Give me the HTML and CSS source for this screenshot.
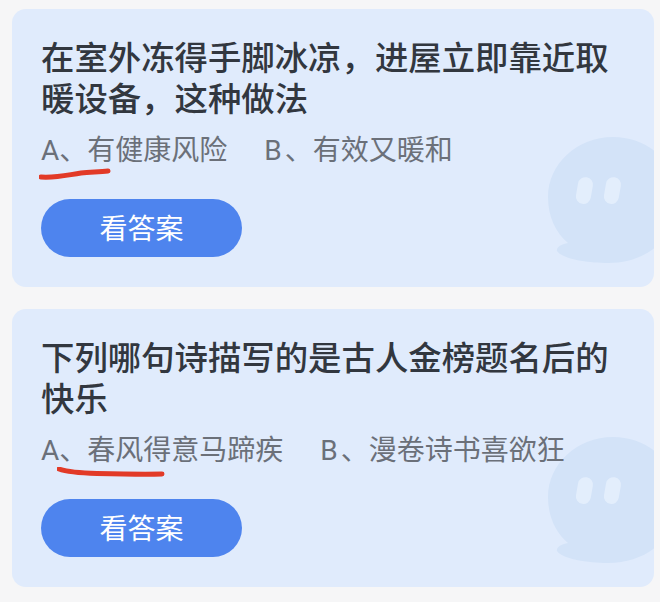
FILE: index.html
```html
<!DOCTYPE html>
<html lang="zh-CN">
<head>
  <meta charset="UTF-8">
  <meta name="viewport" content="width=device-width, initial-scale=1.0">
  <title>答题</title>
  <link rel="stylesheet" href="styles.css">
</head>
<body>
  <!-- Question 1 -->
  <section class="card">
    <svg class="bubble" width="130" height="126" viewBox="0 0 130 126">
      <path d="M65 0C101 0 130 27 130 62C130 100 100 126 60 126C40 126 14 122 9 114C8 110 14 107 20 106C8 96 0 80 0 60C0 27 29 0 65 0Z"/>
      <rect class="eye" x="29" y="40" width="15" height="27" rx="7.500" transform="rotate(10 36 53)"/>
      <rect class="eye" x="57" y="40" width="15" height="27" rx="7.500" transform="rotate(10 64 53)"/>
    </svg>
    <h2 class="question">在室外冻得手脚冰凉，进屋立即靠近取暖设备，这种做法</h2>
    <div class="options">
      <span class="option">A、有健康风险
        <svg class="mark mark-first" width="72" height="12" viewBox="0 0 72 12"><path d="M2 9C18 10 28 7 42 5C52 4 60 4 69 3"/></svg>
      </span>
      <span class="option"><span class="option-key">B</span>、有效又暖和</span>
    </div>
    <button class="answer-btn" type="button">看答案</button>
  </section>

  <!-- Question 2 -->
  <section class="card">
    <svg class="bubble" width="130" height="126" viewBox="0 0 130 126">
      <path d="M65 0C101 0 130 27 130 62C130 100 100 126 60 126C40 126 14 122 9 114C8 110 14 107 20 106C8 96 0 80 0 60C0 27 29 0 65 0Z"/>
      <rect class="eye" x="29" y="40" width="15" height="27" rx="7.500" transform="rotate(10 36 53)"/>
      <rect class="eye" x="57" y="40" width="15" height="27" rx="7.500" transform="rotate(10 64 53)"/>
    </svg>
    <h2 class="question">下列哪句诗描写的是古人金榜题名后的快乐</h2>
    <div class="options">
      <span class="option">A、春风得意马蹄疾
        <svg class="mark mark-second" width="108" height="10" viewBox="0 0 108 10"><path d="M2 2C10 5 22 6 40 6.500C62 7 84 7.500 105 7"/></svg>
      </span>
      <span class="option"><span class="option-key">B</span>、漫卷诗书喜欲狂</span>
    </div>
    <button class="answer-btn" type="button">看答案</button>
  </section>
</body>
</html>
```

FILE: styles.css
```css
* {
  margin: 0;
  padding: 0;
  box-sizing: border-box;
}

body {
  font-family: Roboto, "Noto Sans CJK SC", sans-serif;
  background-color: #f6f6f7;
  padding: 9px 6px 0 12px;
  display: flex;
  flex-direction: column;
  gap: 22px;
}

/* Card */
.card {
  position: relative;
  height: 278px;
  padding: 29px 29px 30px;
  background-color: #e0ebfc;
  border-radius: 14px;
  overflow: hidden;
}

.bubble {
  position: absolute;
  top: 128px;
  right: -24px;
}

.bubble path {
  fill: #d3e3f8;
}

.bubble .eye {
  fill: #e3eefc;
}

/* Text */
.question {
  position: relative;
  font-size: 33.4px;
  font-weight: 500;
  line-height: 41px;
  color: #32373f;
}

.options {
  position: relative;
  display: flex;
  gap: 37px;
  margin-top: 11px;
  font-size: 28px;
  line-height: 40px;
  color: #6b7079;
}

.option {
  position: relative;
}

.option-key {
  padding-right: 3px;
}

/* Red pen marks */
.mark {
  position: absolute;
  fill: none;
  stroke: #e23a27;
  stroke-width: 5;
  stroke-linecap: round;
}

.mark-first {
  left: -2px;
  top: 37px;
}

.mark-second {
  left: 16px;
  top: 36px;
}

/* Button */
.answer-btn {
  position: relative;
  display: block;
  width: 201px;
  height: 58px;
  margin-top: 28px;
  padding-bottom: 2px;
  border: none;
  border-radius: 29px;
  background-color: #4e84ee;
  color: #fff;
  font-family: inherit;
  font-size: 28px;
}
```
